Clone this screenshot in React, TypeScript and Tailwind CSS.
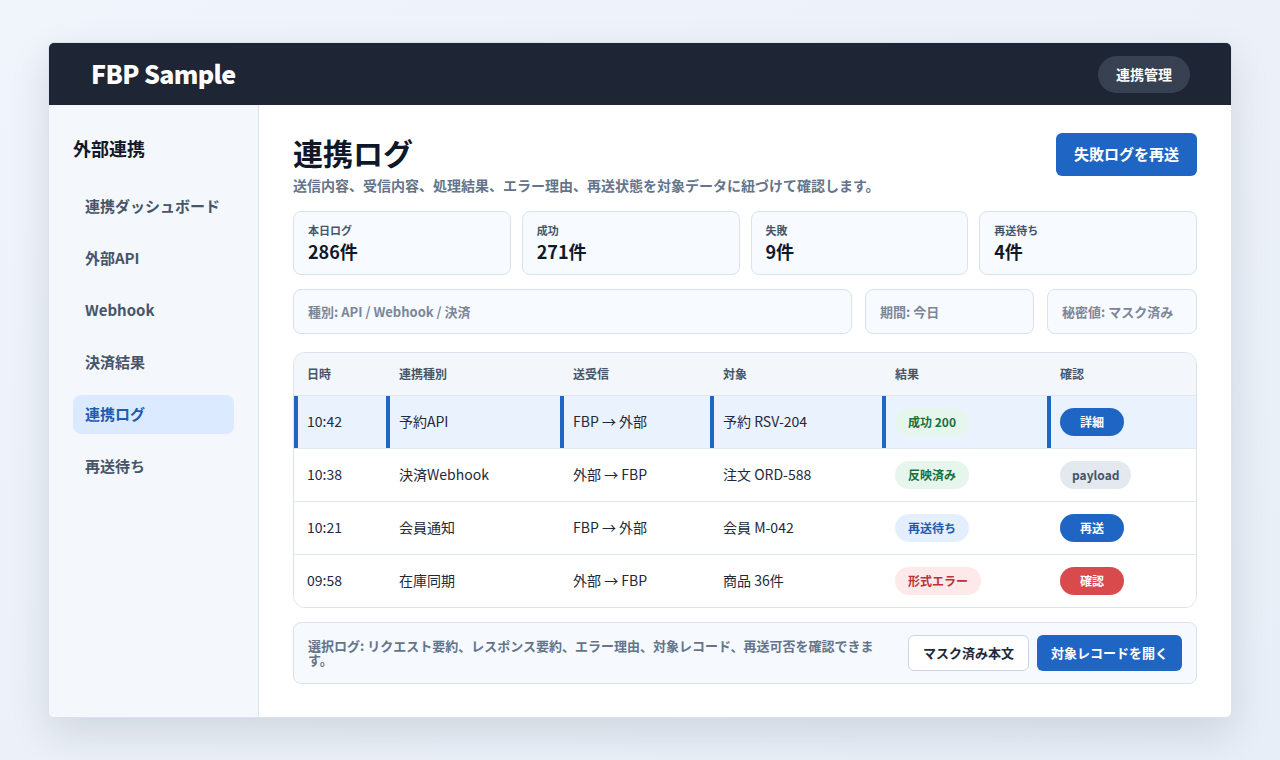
const font = { fontFamily: '"Noto Sans CJK JP", "Noto Sans", sans-serif' }

const navItems = ['連携ダッシュボード', '外部API', 'Webhook', '決済結果', '連携ログ', '再送待ち']

const stats = [
  { label: '本日ログ', value: '286件' },
  { label: '成功', value: '271件' },
  { label: '失敗', value: '9件' },
  { label: '再送待ち', value: '4件' },
]

type Tone = 'green' | 'blue' | 'red'

interface LogRow {
  time: string
  kind: string
  dir: string
  target: string
  result: string
  tone: Tone
  action: string
  actionTone: 'primary' | 'muted' | 'danger'
  selected?: boolean
}

const rows: LogRow[] = [
  { time: '10:42', kind: '予約API', dir: 'FBP → 外部', target: '予約 RSV-204', result: '成功 200', tone: 'green', action: '詳細', actionTone: 'primary', selected: true },
  { time: '10:38', kind: '決済Webhook', dir: '外部 → FBP', target: '注文 ORD-588', result: '反映済み', tone: 'green', action: 'payload', actionTone: 'muted' },
  { time: '10:21', kind: '会員通知', dir: 'FBP → 外部', target: '会員 M-042', result: '再送待ち', tone: 'blue', action: '再送', actionTone: 'primary' },
  { time: '09:58', kind: '在庫同期', dir: '外部 → FBP', target: '商品 36件', result: '形式エラー', tone: 'red', action: '確認', actionTone: 'danger' },
]

const badgeClass: Record<Tone, string> = {
  green: 'bg-[#e7f6ed] text-[#17703f]',
  blue: 'bg-[#e4effd] text-[#1d5cb0]',
  red: 'bg-[#fde9ea] text-[#b9333b]',
}

const actionClass = {
  primary: 'bg-[#1f66c4] text-white',
  muted: 'bg-[#e4e9f0] text-[#475569]',
  danger: 'bg-[#d84a4c] text-white',
}

const colWidths = ['w-[92px]', 'w-[174px]', 'w-[150px]', 'w-[172px]', 'w-[165px]', '']
const headers = ['日時', '連携種別', '送受信', '対象', '結果', '確認']

function Sidebar() {
  return (
    <aside className="w-[210px] shrink-0 bg-[#f4f7fc] border-r border-[#d9e2ee] px-6 pt-[26px]">
      <h2 className="text-[18px] font-bold text-[#111827] leading-[34px]">外部連携</h2>
      <nav className="mt-[22px] flex flex-col gap-[13px]">
        {navItems.map((item) => (
          <div
            key={item}
            className={`h-[39px] flex items-center px-3 rounded-lg text-[15px] font-bold ${
              item === '連携ログ' ? 'bg-[#dbeafe] text-[#1d5cb0]' : 'text-[#475569]'
            }`}
          >
            {item}
          </div>
        ))}
      </nav>
    </aside>
  )
}

function LogTable() {
  return (
    <div className="mt-[18px] border border-[#d9e2ee] rounded-xl overflow-hidden">
      <table className="w-full border-collapse text-left">
        <thead className="bg-[#f3f6fa]">
          <tr className="h-[42px]">
            {headers.map((h, i) => (
              <th key={h} className={`${colWidths[i]} px-[13px] text-[12px] font-bold text-[#475569]`}>
                {h}
              </th>
            ))}
          </tr>
        </thead>
        <tbody>
          {rows.map((row) => {
            const cell = `px-[13px] text-[14px] text-[#1e293b] ${
              row.selected ? 'shadow-[inset_4px_0_0_#1f66c4]' : ''
            }`
            return (
              <tr
                key={row.time}
                className={`h-[53px] border-t border-[#e2e8f0] ${row.selected ? 'bg-[#eaf2fd]' : 'bg-white'}`}
              >
                <td className={cell}>{row.time}</td>
                <td className={cell}>{row.kind}</td>
                <td className={cell}>{row.dir}</td>
                <td className={cell}>{row.target}</td>
                <td className={cell}>
                  <span className={`inline-flex items-center h-[28px] px-[13px] rounded-full text-[12px] font-bold ${badgeClass[row.tone]}`}>
                    {row.result}
                  </span>
                </td>
                <td className={cell}>
                  <span
                    className={`inline-flex items-center justify-center h-[28px] min-w-[64px] px-3 rounded-full text-[12px] font-bold ${actionClass[row.actionTone]}`}
                  >
                    {row.action}
                  </span>
                </td>
              </tr>
            )
          })}
        </tbody>
      </table>
    </div>
  )
}

export default function App() {
  return (
    <div style={font} className="min-h-[760px] bg-gradient-to-br from-[#f0f4fb] to-[#e8eef7] px-[48px] pt-[42px] pb-[43px]">
      <div className="bg-white rounded-md overflow-hidden shadow-[0_16px_40px_rgba(15,23,42,0.12)] border border-[#d9e2ee]">
        <header className="h-[62px] bg-[#1e2636] flex items-center justify-between pl-[42px] pr-[41px]">
          <h1 className="text-[25px] font-extrabold text-white tracking-tight">FBP Sample</h1>
          <button className="h-[37px] px-[18px] rounded-full bg-[#374151] text-white text-[14px] font-bold">
            連携管理
          </button>
        </header>
        <div className="flex h-[612px]">
          <Sidebar />
          <main className="flex-1 px-[34px] pt-[28px]">
            <div className="flex items-start justify-between">
              <div>
                <h2 className="text-[30px] font-bold text-[#0f172a] leading-[38px]">連携ログ</h2>
                <p className="mt-[5px] text-[14px] font-bold text-[#64748b] leading-[18px]">
                  送信内容、受信内容、処理結果、エラー理由、再送状態を対象データに紐づけて確認します。
                </p>
              </div>
              <button className="h-[43px] px-[18px] rounded-md bg-[#1f66c4] text-white text-[15px] font-bold">
                失敗ログを再送
              </button>
            </div>

            <div className="mt-[17px] grid grid-cols-4 gap-[11px]">
              {stats.map((s) => (
                <div key={s.label} className="h-[64px] rounded-lg border border-[#d9e2ee] bg-[#f7faff] px-[14px] pt-[10px]">
                  <div className="text-[11px] font-bold text-[#475569] leading-[16px]">{s.label}</div>
                  <div className="text-[18px] font-bold text-[#111827] leading-[26px]">{s.value}</div>
                </div>
              ))}
            </div>

            <div className="mt-[14px] flex gap-[13px]">
              <div className="flex-1 h-[45px] rounded-lg border border-[#d9e2ee] bg-[#f7faff] px-[14px] flex items-center text-[13px] font-bold text-[#7b8797]">
                種別: API / Webhook / 決済
              </div>
              <div className="w-[169px] h-[45px] rounded-lg border border-[#d9e2ee] bg-[#f7faff] px-[14px] flex items-center text-[13px] font-bold text-[#7b8797]">
                期間: 今日
              </div>
              <div className="w-[150px] h-[45px] rounded-lg border border-[#d9e2ee] bg-[#f7faff] px-[14px] flex items-center text-[13px] font-bold text-[#7b8797]">
                秘密値: マスク済み
              </div>
            </div>

            <LogTable />

            <div className="mt-[14px] h-[62px] rounded-lg border border-[#d9e2ee] bg-[#f6f9fd] pl-[14px] pr-[14px] flex items-center gap-[30px]">
              <p className="flex-1 text-[13px] font-bold text-[#64748b] leading-[14px]">
                選択ログ: リクエスト要約、レスポンス要約、エラー理由、対象レコード、再送可否を確認できます。
              </p>
              <div className="flex gap-2 shrink-0">
                <button className="h-[36px] px-[14px] rounded-md border border-[#cbd5e1] bg-white text-[13px] font-bold text-[#1e293b]">
                  マスク済み本文
                </button>
                <button className="h-[36px] px-[14px] rounded-md bg-[#1f66c4] text-[13px] font-bold text-white">
                  対象レコードを開く
                </button>
              </div>
            </div>
          </main>
        </div>
      </div>
    </div>
  )
}
